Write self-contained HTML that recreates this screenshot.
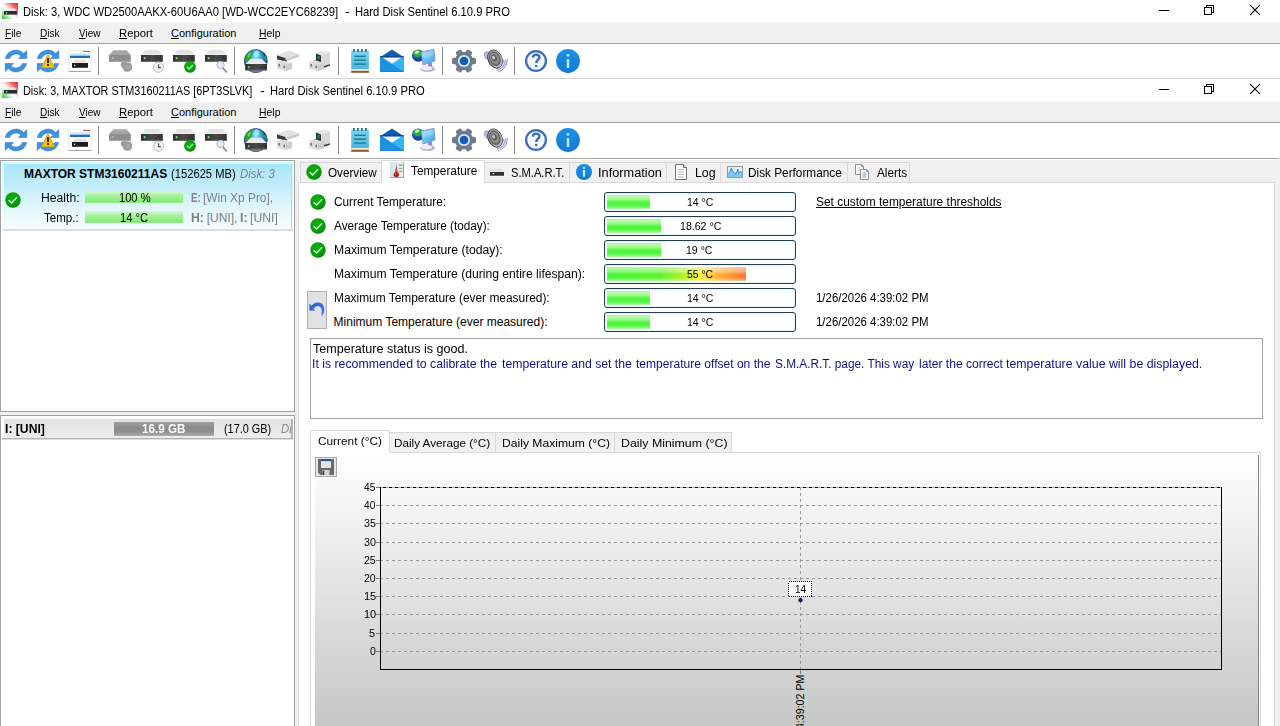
<!DOCTYPE html>
<html><head><meta charset="utf-8"><title>Hard Disk Sentinel</title>
<style>
*{box-sizing:border-box}
html,body{margin:0;padding:0}
body{width:1280px;height:726px;overflow:hidden;background:#f0f0f0;position:relative;font-family:"Liberation Sans",sans-serif;font-size:12px;color:#000}
.a{position:absolute}
.t{position:absolute;white-space:pre;line-height:1;transform-origin:0 0;font-size:12px;font-family:"Liberation Sans",sans-serif}
u{text-decoration:underline;text-underline-offset:1px;text-decoration-thickness:1px}
.w{background:#fff}
.tb{position:absolute;left:0;width:1280px;height:34px;background:#fff}
.sep{position:absolute;top:3px;width:1px;height:28px;background:#8a8a8a}
.ic{position:absolute;top:5px;width:24px;height:24px}
.tab{position:absolute;top:162px;height:20px;background:#f0f0f0;border:1px solid #d9d9d9;border-bottom:none}
.bar{position:absolute;left:604px;width:192px;height:20px;border:1px solid #223c4a;border-radius:3px;background:#fff;box-shadow:inset 0 0 1.5px 1px #dff6f8}
.fill{position:absolute;left:2px;top:2px;height:14px;background:linear-gradient(#b4e8b0 0%,#bafcaa 9%,#a2f792 30%,#58f646 50%,#46f634 66%,#62f650 80%,#98f688 93%,#b6f0b2 100%)}
.ctab{position:absolute;top:432px;height:20px;background:#f0f0f0;border:1px solid #d9d9d9;border-bottom:none}
.btn{position:absolute;background:#e1e1e1;border:1px solid #adadad}
</style></head>
<body>
<svg width="0" height="0" style="position:absolute"><defs>
<linearGradient id="g-app" x1="1" y1="0" x2="0" y2="1"><stop offset="0" stop-color="#e62226"/><stop offset=".25" stop-color="#ee6a6a"/><stop offset=".46" stop-color="#fbe2e2"/><stop offset=".56" stop-color="#ffffff"/><stop offset=".66" stop-color="#e2f8e2"/><stop offset=".82" stop-color="#7fe27f"/><stop offset="1" stop-color="#1fcc2a"/></linearGradient>
<linearGradient id="g-front" x1="0" y1="0" x2="1" y2="0"><stop offset="0" stop-color="#2e2e2e"/><stop offset=".5" stop-color="#4a4a4a"/><stop offset="1" stop-color="#333"/></linearGradient>
<linearGradient id="g-top" x1="0" y1="0" x2="0" y2="1"><stop offset="0" stop-color="#d6d6d6"/><stop offset="1" stop-color="#efefef"/></linearGradient>
<radialGradient id="g-ok" cx=".45" cy=".35" r=".7"><stop offset="0" stop-color="#10b010"/><stop offset=".7" stop-color="#0a9a0a"/><stop offset="1" stop-color="#067a06"/></radialGradient>
<radialGradient id="g-globe" cx=".5" cy=".3" r=".68"><stop offset="0" stop-color="#9af4fc"/><stop offset=".28" stop-color="#46aee8"/><stop offset=".62" stop-color="#2064c4"/><stop offset="1" stop-color="#102a74"/></radialGradient>
<radialGradient id="g-globe2" cx=".4" cy=".3" r=".8"><stop offset="0" stop-color="#3a78e0"/><stop offset=".6" stop-color="#1848b4"/><stop offset="1" stop-color="#0c2a80"/></radialGradient>
<linearGradient id="g-mon" x1="0" y1="0" x2="1" y2="1"><stop offset="0" stop-color="#a4dcfa"/><stop offset=".5" stop-color="#6cc0f6"/><stop offset="1" stop-color="#3c98ec"/></linearGradient>
<radialGradient id="g-spk" cx=".45" cy=".42" r=".6"><stop offset="0" stop-color="#c8c8c8"/><stop offset=".25" stop-color="#808080"/><stop offset=".55" stop-color="#5a5a5a"/><stop offset=".8" stop-color="#b0b0b0"/><stop offset="1" stop-color="#383838"/></radialGradient>
<linearGradient id="g-note" x1="0" y1="0" x2="0" y2="1"><stop offset="0" stop-color="#7fd0ea"/><stop offset="1" stop-color="#4db6da"/></linearGradient>
<linearGradient id="g-info" x1="0" y1="0" x2="0" y2="1"><stop offset="0" stop-color="#1c90e6"/><stop offset="1" stop-color="#1478d2"/></linearGradient>
<linearGradient id="g-undo" x1="0" y1="0" x2="1" y2="1"><stop offset="0" stop-color="#1f5ad8"/><stop offset="1" stop-color="#5c84d8"/></linearGradient>

<filter id="f-b" x="-20%" y="-20%" width="140%" height="140%"><feGaussianBlur stdDeviation=".5"/></filter>
<symbol id="i-app" viewBox="0 0 16 16"><rect width="16" height="16" fill="url(#g-app)"/><path d="M4 5.5H13L14.5 8H2.5Z" fill="#e9e9e9" opacity=".9"/><rect x="2" y="8" width="13" height="3.6" fill="#2c2c2c"/><rect x="4" y="9.2" width="1.2" height="1.2" fill="#e0ffe0"/></symbol>

<symbol id="i-wc" viewBox="0 0 120 23"><g fill="none" stroke="#000" stroke-width="1" shape-rendering="crispEdges"><path d="M9 10.5H19"/><rect x="54.5" y="7.5" width="7" height="7"/><path d="M56.5 7.5V5.5H63.5V12.5H61.5"/></g><path d="M100.2 5.2L109.8 14.8M109.8 5.2L100.2 14.8" stroke="#000" stroke-width="1.1" fill="none"/></symbol>

<symbol id="i-ok" viewBox="0 0 16 16"><circle cx="8" cy="8" r="8" fill="#c8f5c8" opacity=".6"/><circle cx="8" cy="8" r="7.7" fill="url(#g-ok)"/><path d="M3.7 8.3L6.5 10.9L12 5.3" fill="none" stroke="#d4ffd4" stroke-width="1.45"/></symbol>

<symbol id="i-thermo" viewBox="0 0 16 16"><rect x="1" y="0" width="14" height="16" fill="#dde8ee"/><rect x="1" y="0" width="2.5" height="16" fill="#cfe2ea" opacity=".8"/><rect x="9.6" y="1" width="4.2" height="14" fill="#e9f1ec"/><path d="M14.5 0V15.5H1" fill="none" stroke="#98a4ae" stroke-width="1"/><path d="M7.4 2.2L8.7 10.5H5.9Z" fill="#c64646"/><path d="M7.4 1L7.9 4H6.9Z" fill="#e4b8c0"/><circle cx="7.3" cy="12.6" r="2.7" fill="#b21919"/><circle cx="6.6" cy="12" r="1" fill="#e05a5a"/><rect x="10" y="2.6" width="3.4" height="1.1" fill="#7a7a7a"/><rect x="10" y="5.8" width="3.4" height="1.3" fill="#74bf74"/><rect x="10" y="8.8" width="3.4" height="1.3" fill="#74bf74"/></symbol>

<symbol id="i-smart" viewBox="0 0 16 16"><path d="M3 4.8H12L14.5 7.8H0.8Z" fill="#e2e2e2"/><rect x="1" y="8" width="14" height="3.7" fill="#333"/><rect x="1" y="11" width="14" height=".8" fill="#5a5a5a"/><rect x="3.8" y="9" width="1.3" height="1.2" fill="#e8ffe8"/></symbol>

<symbol id="i-info16" viewBox="0 0 16 16"><circle cx="8" cy="8" r="8" fill="url(#g-info)"/><circle cx="8" cy="3.9" r="1.15" fill="#b8f4ff"/><rect x="6.85" y="6" width="2.3" height="6.9" fill="#b8f4ff"/></symbol>

<symbol id="i-log" viewBox="0 0 16 16"><path d="M2.5 0.5H10.5L13.5 3.5V15.5H2.5Z" fill="#fff" stroke="#707070" stroke-width="1"/><path d="M10.5 0.5V3.5H13.5" fill="#e8e8e8" stroke="#707070" stroke-width="1"/><path d="M5 5.5H11M5 8H11M5 10.5H11M5 13H11" stroke="#b4b4b4" stroke-width="1"/></symbol>

<symbol id="i-perf" viewBox="0 0 16 16"><rect x=".5" y="2.5" width="15" height="11" fill="#dff1fd" stroke="#8e99a4" stroke-width="1"/><path d="M1 10.5L2.5 9L3.5 5.5L4.5 4.2L5.5 7L7 8.8L8.5 10L10 7.5L10.8 5L11.5 8.5L13 8L15 8.5V13H1Z" fill="#7ccaf6"/><path d="M1 10.5L2.5 9L3.5 5.5L4.5 4.2L5.5 7L7 8.8L8.5 10L10 7.5L10.8 5L11.5 8.5L13 8L15 8.5" fill="none" stroke="#2e7cc6" stroke-width=".9"/></symbol>

<symbol id="i-alerts" viewBox="0 0 16 16"><path d="M1.5 0.5H7.5L9.5 2.5V10.5H1.5Z" fill="#fff" stroke="#8c8c8c"/><path d="M7.5 0.5V2.5H9.5" fill="none" stroke="#8c8c8c"/><path d="M3.5 4H6M3.5 6.5H5.5" stroke="#c0c0c0"/><path d="M6.5 5.5H12.5L14.5 7.5V15.5H6.5Z" fill="#fff" stroke="#8c8c8c"/><path d="M12.5 5.5V7.5H14.5" fill="none" stroke="#8c8c8c"/><path d="M8.5 9H12.5M8.5 11H12.5M8.5 13H12.5" stroke="#6f9fd4"/></symbol>

<symbol id="i-undo" viewBox="0 0 16 17"><path d="M0 1.8L0 10H7.2L5 7.6C6.5 5.2 10.5 4.6 11.8 7.6C12.8 10 11.6 13.5 12.4 16.4C15.2 13.5 17 8.5 14.8 4.4C12.6 0.4 6.4 -0.4 2.6 4.2Z" fill="url(#g-undo)" stroke="#f2f6ff" stroke-width=".7"/></symbol>

<symbol id="i-floppy" viewBox="0 0 16 16"><path d="M0 0H16V16H2.5L0 13.5Z" fill="#6a6a6a"/><rect x="3" y="0" width="10" height="2" fill="#1d5a98"/><rect x="3" y="2" width="10" height="7" fill="#e4e4e4"/><rect x="3" y="2" width="10" height="1.2" fill="#b8dcf8"/><rect x="4" y="11" width="7.5" height="5" fill="#d2d2d2"/><rect x="4.3" y="11.5" width="2" height="4.5" fill="#4a4a4a"/></symbol>

<!-- 24px toolbar icons -->
<symbol id="b-refresh" viewBox="0 0 24 24"><g fill="#3d92e2" stroke="#2c72c4" stroke-width=".5" stroke-linejoin="round"><path id="rf" d="M1.3 9.5A10.8 10.8 0 0 1 19.7 4.5L22.8 1.5V9.5H14.4L17 7A7 7 0 0 0 5.6 9.5Z"/><use href="#rf" transform="rotate(180 12 12)"/></g></symbol>
<symbol id="b-refreshw" viewBox="0 0 24 24"><use href="#b-refresh"/><path d="M12 5.6L18.4 18.6H5.6Z" fill="#f6c41c" stroke="#d9a514" stroke-width="1" stroke-linejoin="round"/><rect x="11.1" y="9.2" width="1.8" height="4.8" fill="#1a1208"/><rect x="11.1" y="15.1" width="1.8" height="1.7" fill="#1a1208"/></symbol>
<symbol id="b-summary" viewBox="0 0 24 24"><rect x=".6" y="1.3" width="22.6" height="21" fill="#fff" stroke="#e6e6e6" stroke-width=".8"/><rect x=".8" y="22" width="22.2" height="1" fill="#a6a6a6"/><rect x="15.2" y="2" width="6.8" height=".9" fill="#b4483c"/><rect x="2" y="4.4" width="20" height="2.4" fill="#cfe4f8"/><rect x="2" y="6.7" width="20" height="2.3" fill="#1b6ec2"/><path d="M6.5 10.8H17.5L19.5 13.8H4.5Z" fill="#e3e3e3"/><rect x="4" y="14" width="16" height="4.8" fill="#1e1e1e"/><rect x="6" y="15.7" width="1.3" height="1.3" fill="#b4f0b4"/></symbol>
<symbol id="b-drv" viewBox="0 0 24 24"><path d="M5.2 1.3H18.6L22.7 6H1Z" fill="url(#g-top)"/><rect x="1" y="6" width="21.8" height="6.8" fill="url(#g-front)"/><rect x="1" y="12" width="21.8" height=".8" fill="#6a6a6a"/><rect x="3.3" y="7.8" width="2.6" height="2.8" fill="#1f7a1f"/><rect x="3.8" y="8.3" width="1.7" height="1.8" fill="#7fdc7f"/></symbol>
<symbol id="b-drvgray" viewBox="0 0 24 24"><path d="M5.5 1.3H18.5L22.8 6H1Z" fill="#a6a6a6"/><rect x="1" y="6" width="21.8" height="6.8" fill="#8f8f8f"/><rect x="3.7" y="8" width="2" height="2" fill="#b6b6b6"/><circle cx="15.8" cy="15.8" r="3.1" fill="#9c9c9c"/><circle cx="19.4" cy="18" r="4.8" fill="#9a9a9a"/><circle cx="19.8" cy="18.4" r="2.4" fill="#a6a6a6"/></symbol>
<symbol id="b-drvclock" viewBox="0 0 24 24"><use href="#b-drv"/><circle cx="18.5" cy="18.2" r="5.1" fill="#f3f3f3" stroke="#b2b2b2" stroke-width=".9"/><path d="M18.6 15.3V18.6H21" fill="none" stroke="#4a4a4a" stroke-width="1.1"/></symbol>
<symbol id="b-drvok" viewBox="0 0 24 24"><use href="#b-drv"/><circle cx="18" cy="17.8" r="5.9" fill="url(#g-ok)"/><path d="M15 18L17.2 20L21 16" fill="none" stroke="#8dfa9a" stroke-width="1.6"/></symbol>
<symbol id="b-drvfind" viewBox="0 0 24 24"><use href="#b-drv"/><path d="M18.6 18.8L22.4 22.8" stroke="#8e8e8e" stroke-width="1.7" stroke-linecap="round"/><circle cx="16.5" cy="16" r="3.7" fill="#e6edf9" stroke="#a3abb8" stroke-width=".9"/></symbol>
<symbol id="b-globedrv" viewBox="0 0 24 24"><circle cx="11.8" cy="12" r="11.5" fill="url(#g-globe)" stroke="#1b2f66" stroke-width=".6"/><g filter="url(#f-b)"><path d="M2 7C3.5 3.6 6.5 1.6 9.3 1.2C8.6 3.4 7.6 5.4 7.6 8.4C6.4 10.6 4 12.6 1 13.2C.7 11 1.1 8.8 2 7Z" fill="#2aa62a"/><path d="M3.4 6.4C4.6 4.6 6 3.6 7.4 3.2C6.6 5 6.2 6.8 5.4 8.2C4.6 8.8 3.6 8 3.4 6.4Z" fill="#58d858"/><path d="M16.6 2.6C19.8 4 22.4 7.4 23 11.4C21.6 11.6 20.4 10 19.6 8.2C18.4 6.6 17.4 4.8 16.6 2.6Z" fill="#2e9c36"/><path d="M18.8 3.4C20.4 4.4 21.6 5.8 22.2 7.4C21 7.2 19.6 5.4 18.8 3.4Z" fill="#14285c"/><ellipse cx="12.6" cy="4.6" rx="2.6" ry="3.2" fill="#a8f4fc" opacity=".75"/></g><ellipse cx="12" cy="22" rx="6.4" ry="1.4" fill="#6c7c92"/><path d="M6.8 9.8H17.4L23 15H1.2Z" fill="#e9e9ee"/><rect x="1.2" y="15" width="21.8" height="6.4" fill="url(#g-front)"/><rect x="1.2" y="20.7" width="21.8" height=".8" fill="#777"/><rect x="3.5" y="17" width="2.4" height="2.4" fill="#1f7a1f"/><rect x="4" y="17.4" width="1.5" height="1.6" fill="#7fdc7f"/></symbol>
<symbol id="b-usb1" viewBox="0 0 24 24"><path d="M1 6.5L13 1.7L23 5.4V7.8L11 11.6L1 8Z" fill="#d9d9d9"/><path d="M13 1.7L23 5.4L11.2 9.2L1 6.5Z" fill="#e0e0e0"/><path d="M11.2 9.2L23 5.4V7.8L11.2 11.8Z" fill="#c9c9c9"/><path d="M1 6.6L9.5 8.9V12L1 10.5Z" fill="#3c3c3c"/><path d="M5 10L11 11.5V13L7 13.5Z" fill="#222"/><path d="M1 12.5L8 11.4L16 14V20L9.5 22L1 19.5Z" fill="#dcdcdc"/><path d="M9.5 15.5L16 14V20L9.5 22Z" fill="#cdcdcd"/><rect x="2.7" y="15" width="1.2" height="2.6" fill="#5a5a5a"/><rect x="7.6" y="16.6" width="1.2" height="2.6" fill="#5a5a5a"/></symbol>
<symbol id="b-usb2" viewBox="0 0 24 24"><path d="M8 4.5L15 1.5L22 3.5V16L14 18.5L8 13Z" fill="#d8d8d8"/><path d="M8 4.5L15 1.5L22 3.5L13 6.5Z" fill="#e6e6e6"/><path d="M8 4.5L13 6.5V14.5L8 12.5Z" fill="#24402c"/><rect x="9.6" y="7" width="2" height="3" fill="#4f7a5a"/><path d="M16 17L22 15.2V16.8L16 18.8Z" fill="#3a3a3a"/><path d="M4.5 12L10 11V13L6 13.5Z" fill="#333"/><path d="M1 12.5L8 11.6L16 14V20L9.5 22L1 19.5Z" fill="#dcdcdc"/><path d="M9.5 15.5L16 14V20L9.5 22Z" fill="#cdcdcd"/><rect x="2.7" y="15" width="1.2" height="2.6" fill="#5a5a5a"/><rect x="7.6" y="16.6" width="1.2" height="2.6" fill="#5a5a5a"/></symbol>
<symbol id="b-note" viewBox="0 0 24 24"><rect x="3.2" y="1.7" width="17.7" height="18.4" fill="url(#g-note)"/><g fill="#1d6e8e"><rect x="5" y="0" width="1.8" height="2.8"/><rect x="9" y="0" width="1.8" height="2.8"/><rect x="13" y="0" width="1.8" height="2.8"/><rect x="17" y="0" width="1.8" height="2.8"/></g><g fill="#0f7ea4"><rect x="6.2" y="6.6" width="11.6" height="1.4"/><rect x="6.2" y="10.5" width="11.6" height="1.4"/><rect x="6.2" y="14.4" width="11.6" height="1.4"/></g><rect x="3.2" y="20.1" width="17.7" height="1.7" fill="#efe6d9"/><rect x="3.2" y="21.8" width="17.7" height="2" fill="#8b5a2b"/></symbol>
<symbol id="b-mail" viewBox="0 0 24 24"><rect x="0" y="7.5" width="23.8" height="15.3" fill="#1f8fe2"/><path d="M2 8.5L23.8 22.8V7.5Z" fill="#33b6f2"/><path d="M2.2 8.3H21.8L12 14.8Z" fill="#f4f8fc"/><path d="M12 .6L24 8.2H0Z" fill="#0f5cb4"/><rect x="0" y="7.3" width="23.8" height="1" fill="#0b3e86"/><rect x="0" y="22" width="23.8" height=".8" fill="#1878cc"/></symbol>
<symbol id="b-netpc" viewBox="0 0 24 24"><circle cx="6.2" cy="6.6" r="6.2" fill="url(#g-globe2)"/><g filter="url(#f-b)"><path d="M1 5C1.6 2.4 4.2 .6 7 .8C9.4 1.2 10.4 3 10 5C9 7.4 6.6 8.6 4.6 8C2.8 7.6 1.6 6.4 1 5Z" fill="#2fae38"/><ellipse cx="5" cy="3.2" rx="2.4" ry="1.5" fill="#b4fab4" transform="rotate(-25 5 3.2)"/></g><path d="M15.6 13.5L19.6 12.4L20.4 18L16.6 18.6Z" fill="#9484cc"/><ellipse cx="15.5" cy="19.8" rx="7.4" ry="3" fill="#b0a8d4"/><ellipse cx="14.6" cy="19.2" rx="6" ry="2.2" fill="#f1eef9"/><path d="M9.2 3L22 .3L23 12L11 16Z" fill="url(#g-mon)" stroke="#7c9cc6" stroke-width=".9" stroke-linejoin="round"/><path d="M10.4 4L21 1.7L21.4 6.5L10.9 9.5Z" fill="#fff" opacity=".22"/></symbol>
<symbol id="b-gear" viewBox="0 0 24 24"><g fill="#6f7a8a"><circle cx="12" cy="12" r="9.2"/><rect x="8.8" y="0" width="6.4" height="5" rx="1.6" transform="rotate(30 12 12)"/><rect x="8.8" y="0" width="6.4" height="5" rx="1.6" transform="rotate(90 12 12)"/><rect x="8.8" y="0" width="6.4" height="5" rx="1.6" transform="rotate(150 12 12)"/><rect x="8.8" y="0" width="6.4" height="5" rx="1.6" transform="rotate(210 12 12)"/><rect x="8.8" y="0" width="6.4" height="5" rx="1.6" transform="rotate(270 12 12)"/><rect x="8.8" y="0" width="6.4" height="5" rx="1.6" transform="rotate(330 12 12)"/></g><circle cx="12" cy="12" r="6.1" fill="#d4eafc"/><circle cx="12" cy="12" r="4.3" fill="#145cb6"/></symbol>
<symbol id="b-spk" viewBox="0 0 24 24"><g fill="none" stroke="#a199d6" stroke-width="1.25"><path d="M21.4 10.4A11 11 0 0 1 13 21.2"/><path d="M19.5 10.9A9 9 0 0 1 12.2 19.3"/><path d="M23.2 9.8A13 13 0 0 1 14 23"/></g><ellipse cx="3" cy="6.5" rx="2.6" ry="4" fill="#bdb8e4" stroke="#8a86b6" stroke-width=".6" transform="rotate(-20 3 6.5)"/><g transform="rotate(-24 11 10)"><ellipse cx="11" cy="10" rx="7.3" ry="9.9" fill="#3c3c3c"/><ellipse cx="11.3" cy="10" rx="6.5" ry="9.1" fill="#b8b8b8"/><ellipse cx="11" cy="9.6" rx="5.6" ry="7.8" fill="#6a6a6a"/><ellipse cx="10.8" cy="9.2" rx="4.2" ry="5.9" fill="#8e8e8e"/><ellipse cx="10.6" cy="8.8" rx="2.6" ry="3.6" fill="#5c5c5c"/><ellipse cx="10.3" cy="8.2" rx="1.5" ry="2" fill="#c4c4c4"/></g></symbol>
<symbol id="b-help" viewBox="0 0 24 24"><circle cx="12" cy="12" r="9.9" fill="#f5f9ff" stroke="#3d6dba" stroke-width="2.3"/><path d="M8.9 8.6C9 6.4 10.4 5.6 12.1 5.6C14 5.6 15.4 6.7 15.4 8.4C15.4 10.6 12.3 10.9 12.3 14" fill="none" stroke="#3d6dba" stroke-width="2.4"/><circle cx="12.2" cy="17" r="1.35" fill="#3d6dba"/></symbol>
<symbol id="b-info" viewBox="0 0 24 24"><circle cx="12" cy="12" r="11.9" fill="url(#g-info)"/><circle cx="12" cy="6.4" r="1.35" fill="#b4f2ff"/><rect x="10.75" y="10.2" width="2.5" height="8.8" fill="#b4f2ff"/></symbol>

</defs></svg>

<!-- window 1 -->
<div class="a w" style="left:0;top:0;width:1280px;height:23px"></div>
<div class="a" style="left:0;top:43px;width:1280px;height:1px;background:#a0a0a0"></div>
<div class="tb" style="top:44px" id="tb1"><svg class="ic" style="left:4px" width="24" height="24"><use href="#b-refresh"/></svg><svg class="ic" style="left:36px" width="24" height="24"><use href="#b-refreshw"/></svg><svg class="ic" style="left:68px" width="24" height="24"><use href="#b-summary"/></svg><div class="sep" style="left:98px"></div><svg class="ic" style="left:108px" width="24" height="24"><use href="#b-drvgray"/></svg><svg class="ic" style="left:140px" width="24" height="24"><use href="#b-drvclock"/></svg><svg class="ic" style="left:172px" width="24" height="24"><use href="#b-drvok"/></svg><svg class="ic" style="left:204px" width="24" height="24"><use href="#b-drvfind"/></svg><div class="sep" style="left:234px"></div><svg class="ic" style="left:244px" width="24" height="24"><use href="#b-globedrv"/></svg><svg class="ic" style="left:276px" width="24" height="24"><use href="#b-usb1"/></svg><svg class="ic" style="left:308px" width="24" height="24"><use href="#b-usb2"/></svg><div class="sep" style="left:338px"></div><svg class="ic" style="left:348px" width="24" height="24"><use href="#b-note"/></svg><svg class="ic" style="left:380px" width="24" height="24"><use href="#b-mail"/></svg><svg class="ic" style="left:412px" width="24" height="24"><use href="#b-netpc"/></svg><div class="sep" style="left:442px"></div><svg class="ic" style="left:452px" width="24" height="24"><use href="#b-gear"/></svg><svg class="ic" style="left:484px" width="24" height="24"><use href="#b-spk"/></svg><div class="sep" style="left:514px"></div><svg class="ic" style="left:524px" width="24" height="24"><use href="#b-help"/></svg><svg class="ic" style="left:556px" width="24" height="24"><use href="#b-info"/></svg></div>
<div class="a" style="left:0;top:78px;width:1280px;height:1px;background:#d4d4d4"></div>
<!-- window 2 -->
<div class="a w" style="left:0;top:79px;width:1280px;height:23px"></div>
<div class="a" style="left:0;top:122px;width:1280px;height:1px;background:#a0a0a0"></div>
<div class="tb" style="top:123px;height:35px" id="tb2"><svg class="ic" style="left:4px" width="24" height="24"><use href="#b-refresh"/></svg><svg class="ic" style="left:36px" width="24" height="24"><use href="#b-refreshw"/></svg><svg class="ic" style="left:68px" width="24" height="24"><use href="#b-summary"/></svg><div class="sep" style="left:98px"></div><svg class="ic" style="left:108px" width="24" height="24"><use href="#b-drvgray"/></svg><svg class="ic" style="left:140px" width="24" height="24"><use href="#b-drvclock"/></svg><svg class="ic" style="left:172px" width="24" height="24"><use href="#b-drvok"/></svg><svg class="ic" style="left:204px" width="24" height="24"><use href="#b-drvfind"/></svg><div class="sep" style="left:234px"></div><svg class="ic" style="left:244px" width="24" height="24"><use href="#b-globedrv"/></svg><svg class="ic" style="left:276px" width="24" height="24"><use href="#b-usb1"/></svg><svg class="ic" style="left:308px" width="24" height="24"><use href="#b-usb2"/></svg><div class="sep" style="left:338px"></div><svg class="ic" style="left:348px" width="24" height="24"><use href="#b-note"/></svg><svg class="ic" style="left:380px" width="24" height="24"><use href="#b-mail"/></svg><svg class="ic" style="left:412px" width="24" height="24"><use href="#b-netpc"/></svg><div class="sep" style="left:442px"></div><svg class="ic" style="left:452px" width="24" height="24"><use href="#b-gear"/></svg><svg class="ic" style="left:484px" width="24" height="24"><use href="#b-spk"/></svg><div class="sep" style="left:514px"></div><svg class="ic" style="left:524px" width="24" height="24"><use href="#b-help"/></svg><svg class="ic" style="left:556px" width="24" height="24"><use href="#b-info"/></svg></div>
<div class="a" style="left:0;top:158px;width:1279px;height:1px;background:#a0a0a0"></div>
<div class="a w" style="left:0;top:159px;width:1280px;height:1px"></div>

<!-- title icons & window buttons -->
<svg class="a" style="left:2px;top:3px" width="16" height="16"><use href="#i-app"/></svg>
<svg class="a" style="left:2px;top:82px" width="16" height="16"><use href="#i-app"/></svg>
<svg class="a" style="left:1150px;top:0" width="120" height="23"><use href="#i-wc"/></svg>
<svg class="a" style="left:1150px;top:79px" width="120" height="23"><use href="#i-wc"/></svg>

<!-- left panels -->
<div class="a w" style="left:0;top:160px;width:295px;height:252px;border:1px solid #a0a0a0"></div>
<div class="a" style="left:2px;top:162px;width:291px;height:67px;background:linear-gradient(#cdfafc 0%,#ddfbfd 35%,#f0fdfe 70%,#fdffff 100%)"></div>
<div class="a" style="left:4px;top:164px;width:288px;height:65px;background:linear-gradient(#a8e5f9 0%,#c2ecfa 32%,#dff5fc 64%,#f7fcfe 100%);border-right:1px solid #bcd2da"></div>
<div class="a" style="left:3px;top:229px;width:290px;height:2px;background:#dcdcdd"></div>
<div class="a" style="left:85px;top:191px;width:98px;height:12px;background:linear-gradient(#d4f8cf 0%,#a6f29b 40%,#84ea76 92%,#a0f094 100%)"></div>
<div class="a" style="left:85px;top:211px;width:98px;height:12px;background:linear-gradient(#d4f8cf 0%,#a6f29b 40%,#84ea76 92%,#a0f094 100%)"></div>
<svg class="a" style="left:5px;top:192px" width="16" height="16"><use href="#i-ok"/></svg>

<div class="a w" style="left:0;top:415px;width:295px;height:330px;border:1px solid #a0a0a0"></div>
<div class="a" style="left:4px;top:419px;width:289px;height:19px;background:linear-gradient(#e1e1e1,#eeeeee);border-right:2px solid #b6b6b6"></div>
<div class="a" style="left:2px;top:438px;width:291px;height:1px;background:#b2b2b2"></div>
<div class="a" style="left:2px;top:439px;width:291px;height:1px;background:#dedede"></div>
<div class="a" style="left:114px;top:422px;width:100px;height:14px;background:linear-gradient(#a0a0a0 0%,#8a8a8a 40%,#909090 70%,#adadad 100%)"></div>
<div class="a" style="left:281px;top:419px;width:10px;height:19px;overflow:hidden"><span class="t" style="left:0.2px;top:4px;font-style:italic;color:#8c8c8c;font-size:12px;transform:scaleX(.95)">Disk</span></div>

<!-- main tab control -->
<div class="a w" style="left:298px;top:182px;width:977px;height:560px;border:1px solid #d9d9d9"></div>
<div class="tab" style="left:300px;width:82px"></div>
<div class="tab" style="left:484px;width:86px"></div>
<div class="tab" style="left:569px;width:98px"></div>
<div class="tab" style="left:666px;width:55px"></div>
<div class="tab" style="left:720px;width:128px"></div>
<div class="tab" style="left:847px;width:63px"></div>
<div class="tab" style="left:381px;top:160px;width:104px;height:23px;background:#fff"></div>
<svg class="a" style="left:306px;top:164px" width="16" height="16"><use href="#i-ok"/></svg>
<svg class="a" style="left:389px;top:162px" width="16" height="16"><use href="#i-thermo"/></svg>
<svg class="a" style="left:489px;top:164px" width="16" height="16"><use href="#i-smart"/></svg>
<svg class="a" style="left:576px;top:164px" width="16" height="16"><use href="#i-info16"/></svg>
<svg class="a" style="left:673px;top:164px" width="16" height="16"><use href="#i-log"/></svg>
<svg class="a" style="left:727px;top:164px" width="16" height="16"><use href="#i-perf"/></svg>
<svg class="a" style="left:854px;top:164px" width="16" height="16"><use href="#i-alerts"/></svg>

<!-- rows -->
<svg class="a" style="left:310px;top:194px" width="16" height="16"><use href="#i-ok"/></svg>
<svg class="a" style="left:310px;top:218px" width="16" height="16"><use href="#i-ok"/></svg>
<svg class="a" style="left:310px;top:242px" width="16" height="16"><use href="#i-ok"/></svg>
<div class="btn" style="left:307px;top:291px;width:20px;height:38px"></div>
<svg class="a" style="left:309px;top:301px" width="16" height="17"><use href="#i-undo"/></svg>

<div class="bar" style="top:192px"><div class="fill" style="width:43px"></div></div>
<div class="bar" style="top:216px"><div class="fill" style="width:54px"></div></div>
<div class="bar" style="top:240px"><div class="fill" style="width:54px"></div></div>
<div class="bar" style="top:264px"><div class="fill" style="width:139px;background:linear-gradient(rgba(255,255,255,.6) 0%,rgba(255,255,255,.5) 9%,rgba(255,255,255,.4) 30%,rgba(255,255,255,.06) 50%,rgba(255,255,255,0) 66%,rgba(255,255,255,.1) 80%,rgba(255,255,255,.35) 93%,rgba(255,255,255,.55) 100%),linear-gradient(90deg,#46f634 0%,#5cf22c 38%,#b8f020 56%,#fff030 68%,#ffb030 80%,#ff7030 100%)"></div></div>
<div class="bar" style="top:288px"><div class="fill" style="width:43px"></div></div>
<div class="bar" style="top:312px"><div class="fill" style="width:43px"></div></div>

<!-- message box -->
<div class="a w" style="left:310px;top:338px;width:953px;height:81px;border:1px solid #a0a0a0"></div>
<!-- chart tab control -->
<div class="a w" style="left:310px;top:452px;width:951px;height:300px;border:1px solid #d9d9d9"></div>
<div class="ctab" style="left:389px;width:107px"></div>
<div class="ctab" style="left:495px;width:121px"></div>
<div class="ctab" style="left:614px;width:118px"></div>
<div class="ctab" style="left:310px;top:430px;width:80px;height:23px;background:#fff"></div>
<div class="a" style="left:315px;top:455px;width:944px;height:290px;background:linear-gradient(#ffffff 0px,#c6c6c6 271px,#c0c0c0 290px);border-right:1px solid #868686"></div>
<svg class="a" style="left:0;top:0" width="1280" height="726" shape-rendering="crispEdges">
<g stroke="#989898" stroke-width="1" stroke-dasharray="3 3" fill="none">
<path d="M380 505.5H1221M380 523.5H1221M380 542.5H1221M380 560.5H1221M380 578.5H1221M380 596.5H1221M380 614.5H1221M380 633.5H1221M380 651.5H1221"/>
<path d="M800.5 487V669"/>
</g>
<g stroke="#7a7a7a" stroke-width="1" fill="none">
<path d="M376 487.5H380M376 505.5H380M376 523.5H380M376 542.5H380M376 560.5H380M376 578.5H380M376 596.5H380M376 614.5H380M376 633.5H380M376 651.5H380M800.5 670V674"/>
</g>
<path d="M381 487.5H1221" stroke="#b2b2b2" stroke-width="1" fill="none"/><path d="M383 487.5H1221" stroke="#000" stroke-width="1" stroke-dasharray="3 3" fill="none"/>
<path d="M380.5 487V669.5H1221.5V487" stroke="#000" stroke-width="1" fill="none"/>
<rect x="788.5" y="581.5" width="23" height="15" fill="#fff" stroke="#000" stroke-dasharray="1 1"/>
<circle cx="800.5" cy="600.2" r="2.1" fill="#10104c" shape-rendering="auto"/>
</svg>
<div class="btn" style="left:315px;top:457px;width:22px;height:20px;background:#e6e6e6;border-color:#a6a6a6"></div>
<svg class="a" style="left:318px;top:459px" width="16" height="16"><use href="#i-floppy"/></svg>
<svg class="a" style="left:780px;top:660px" width="40" height="66"><text transform="translate(24.3 14.6) rotate(-90)" text-anchor="end" font-family="Liberation Sans, sans-serif" font-size="10.67" fill="#000">1/26/2026 4:39:02 PM</text></svg>


<span class="t" style="left:22.96px;top:6px;transform:scaleX(0.9356);">Disk: 3, WDC WD2500AAKX-60U6AA0 [WD-WCC2EYC68239]</span>
<span class="t" style="left:344.67px;top:6px;transform:scaleX(1.2096);">-</span>
<span class="t" style="left:354.76px;top:6px;transform:scaleX(0.9363);">Hard Disk Sentinel 6.10.9 PRO</span>
<span class="t" style="left:23.04px;top:85px;transform:scaleX(0.9045);">Disk: 3, MAXTOR STM3160211AS [6PT3SLVK]</span>
<span class="t" style="left:259.67px;top:85px;transform:scaleX(1.2096);">-</span>
<span class="t" style="left:269.76px;top:85px;transform:scaleX(0.9359);">Hard Disk Sentinel 6.10.9 PRO</span>
<span class="t" style="left:4.79px;top:28px;font-size:11px;transform:scaleX(0.9218);"><u>F</u>ile</span>
<span class="t" style="left:40.21px;top:28px;font-size:11px;transform:scaleX(0.9125);"><u>D</u>isk</span>
<span class="t" style="left:78.96px;top:28px;font-size:11px;transform:scaleX(0.9110);"><u>V</u>iew</span>
<span class="t" style="left:118.57px;top:28px;font-size:11px;transform:scaleX(1.0245);"><u>R</u>eport</span>
<span class="t" style="left:170.98px;top:28px;font-size:11px;"><u>C</u>onfiguration</span>
<span class="t" style="left:258.74px;top:28px;font-size:11px;transform:scaleX(0.9464);"><u>H</u>elp</span>
<span class="t" style="left:4.79px;top:107px;font-size:11px;transform:scaleX(0.9218);"><u>F</u>ile</span>
<span class="t" style="left:40.21px;top:107px;font-size:11px;transform:scaleX(0.9125);"><u>D</u>isk</span>
<span class="t" style="left:78.96px;top:107px;font-size:11px;transform:scaleX(0.9110);"><u>V</u>iew</span>
<span class="t" style="left:118.57px;top:107px;font-size:11px;transform:scaleX(1.0245);"><u>R</u>eport</span>
<span class="t" style="left:170.98px;top:107px;font-size:11px;"><u>C</u>onfiguration</span>
<span class="t" style="left:258.74px;top:107px;font-size:11px;transform:scaleX(0.9464);"><u>H</u>elp</span>
<span class="t" style="left:23.99px;top:168px;font-weight:700;">MAXTOR STM3160211AS</span>
<span class="t" style="left:170.99px;top:168px;transform:scaleX(0.9332);">(152625 MB)</span>
<span class="t" style="left:240.48px;top:168px;transform:scaleX(0.9479);font-style:italic;color:#808080;">Disk: 3</span>
<span class="t" style="left:41.00px;top:192px;transform:scaleX(1.0157);">Health:</span>
<span class="t" style="left:43.99px;top:212px;transform:scaleX(0.9624);">Temp.:</span>
<span class="t" style="left:119.21px;top:192px;transform:scaleX(0.9266);">100 %</span>
<span class="t" style="left:120.10px;top:212px;transform:scaleX(0.9356);">14 °C</span>
<span class="t" style="left:191.34px;top:192px;transform:scaleX(0.8010);font-weight:700;color:#7c8084;">E:</span>
<span class="t" style="left:203.33px;top:192px;transform:scaleX(0.9912);color:#7c8084;">[Win Xp Pro],</span>
<span class="t" style="left:190.87px;top:212px;transform:scaleX(1.0195);font-weight:700;color:#7c8084;">H:</span>
<span class="t" style="left:206.67px;top:212px;color:#7c8084;">[UNI],</span>
<span class="t" style="left:240.39px;top:212px;transform:scaleX(1.0233);font-weight:700;color:#7c8084;">I:</span>
<span class="t" style="left:250.08px;top:212px;transform:scaleX(1.0165);color:#7c8084;">[UNI]</span>
<span class="t" style="left:5.30px;top:423px;transform:scaleX(1.0138);font-weight:700;">I: [UNI]</span>
<span class="t" style="left:142.00px;top:423px;transform:scaleX(0.9744);font-weight:700;color:#fff;">16.9 GB</span>
<span class="t" style="left:224.10px;top:423px;transform:scaleX(0.9049);">(17.0 GB)</span>
<span class="t" style="left:327.97px;top:167px;transform:scaleX(0.9727);">Overview</span>
<span class="t" style="left:411.38px;top:165px;transform:scaleX(0.9829);">Temperature</span>
<span class="t" style="left:510.58px;top:167px;transform:scaleX(0.9284);">S.M.A.R.T.</span>
<span class="t" style="left:597.79px;top:167px;transform:scaleX(1.0641);">Information</span>
<span class="t" style="left:694.59px;top:167px;transform:scaleX(1.0300);">Log</span>
<span class="t" style="left:748.23px;top:167px;transform:scaleX(0.9827);">Disk Performance</span>
<span class="t" style="left:876.51px;top:167px;transform:scaleX(0.9805);">Alerts</span>
<span class="t" style="left:333.86px;top:196px;transform:scaleX(0.9851);">Current Temperature:</span>
<span class="t" style="left:334.04px;top:220px;transform:scaleX(0.9804);">Average Temperature (today):</span>
<span class="t" style="left:333.61px;top:244px;transform:scaleX(1.0130);">Maximum Temperature (today):</span>
<span class="t" style="left:333.61px;top:268px;transform:scaleX(1.0107);">Maximum Temperature (during entire lifespan):</span>
<span class="t" style="left:333.62px;top:292px;transform:scaleX(0.9930);">Maximum Temperature (ever measured):</span>
<span class="t" style="left:333.62px;top:316px;">Minimum Temperature (ever measured):</span>
<span class="t" style="left:686.99px;top:197px;font-size:11px;transform:scaleX(0.9552);">14 °C</span>
<span class="t" style="left:679.62px;top:221px;font-size:11px;transform:scaleX(0.9617);">18.62 °C</span>
<span class="t" style="left:686.39px;top:245px;font-size:11px;transform:scaleX(0.9572);">19 °C</span>
<span class="t" style="left:687.18px;top:269px;font-size:11px;transform:scaleX(0.9447);">55 °C</span>
<span class="t" style="left:686.99px;top:293px;font-size:11px;transform:scaleX(0.9552);">14 °C</span>
<span class="t" style="left:686.99px;top:317px;font-size:11px;transform:scaleX(0.9552);">14 °C</span>
<span class="t" style="left:815.65px;top:196px;transform:scaleX(0.9937);text-decoration:underline;text-underline-offset:1px;">Set custom temperature thresholds</span>
<span class="t" style="left:815.61px;top:292px;transform:scaleX(0.9532);">1/26/2026 4:39:02 PM</span>
<span class="t" style="left:815.61px;top:316px;transform:scaleX(0.9532);">1/26/2026 4:39:02 PM</span>
<span class="t" style="left:318.14px;top:436px;font-size:11px;transform:scaleX(1.0755);">Current (°C)</span>
<span class="t" style="left:393.95px;top:438px;font-size:11px;transform:scaleX(1.0626);">Daily Average (°C)</span>
<span class="t" style="left:501.72px;top:438px;font-size:11px;transform:scaleX(1.1024);">Daily Maximum (°C)</span>
<span class="t" style="left:621.17px;top:438px;font-size:11px;transform:scaleX(1.1235);">Daily Minimum (°C)</span>
<span class="t" style="left:363.99px;top:482px;font-size:10.67px;transform:scaleX(0.9539);">45</span>
<span class="t" style="left:363.99px;top:500px;font-size:10.67px;transform:scaleX(0.9522);">40</span>
<span class="t" style="left:363.81px;top:518px;font-size:10.67px;transform:scaleX(1.0101);">35</span>
<span class="t" style="left:363.82px;top:537px;font-size:10.67px;transform:scaleX(1.0038);">30</span>
<span class="t" style="left:364.07px;top:555px;font-size:10.67px;transform:scaleX(0.9857);">25</span>
<span class="t" style="left:364.07px;top:573px;font-size:10.67px;transform:scaleX(0.9840);">20</span>
<span class="t" style="left:363.93px;top:591px;font-size:10.67px;transform:scaleX(1.0329);">15</span>
<span class="t" style="left:363.93px;top:609px;font-size:10.67px;transform:scaleX(1.0278);">10</span>
<span class="t" style="left:369.23px;top:628px;font-size:10.67px;transform:scaleX(1.0324);">5</span>
<span class="t" style="left:369.74px;top:646px;font-size:10.67px;transform:scaleX(0.9901);">0</span>
<span class="t" style="left:794.66px;top:584px;font-size:10.67px;transform:scaleX(0.9482);">14</span>
<span class="t" style="left:312.97px;top:343px;transform:scaleX(1.0465);">Temperature status is good.</span>
<span class="t" style="left:311.78px;top:358px;transform:scaleX(1.0236);color:#121088;">It is recommended to calibrate the</span>
<span class="t" style="left:502.23px;top:358px;transform:scaleX(1.0191);color:#121088;">temperature and set the</span>
<span class="t" style="left:635.98px;top:358px;transform:scaleX(1.0042);color:#121088;">temperature offset on the</span>
<span class="t" style="left:775.48px;top:358px;transform:scaleX(0.9855);color:#121088;">S.M.A.R.T. page. This way</span>
<span class="t" style="left:918.63px;top:358px;transform:scaleX(1.0063);color:#121088;">later the correct</span>
<span class="t" style="left:1005.98px;top:358px;transform:scaleX(1.0290);color:#121088;">temperature value will be displayed.</span>
</body></html>
